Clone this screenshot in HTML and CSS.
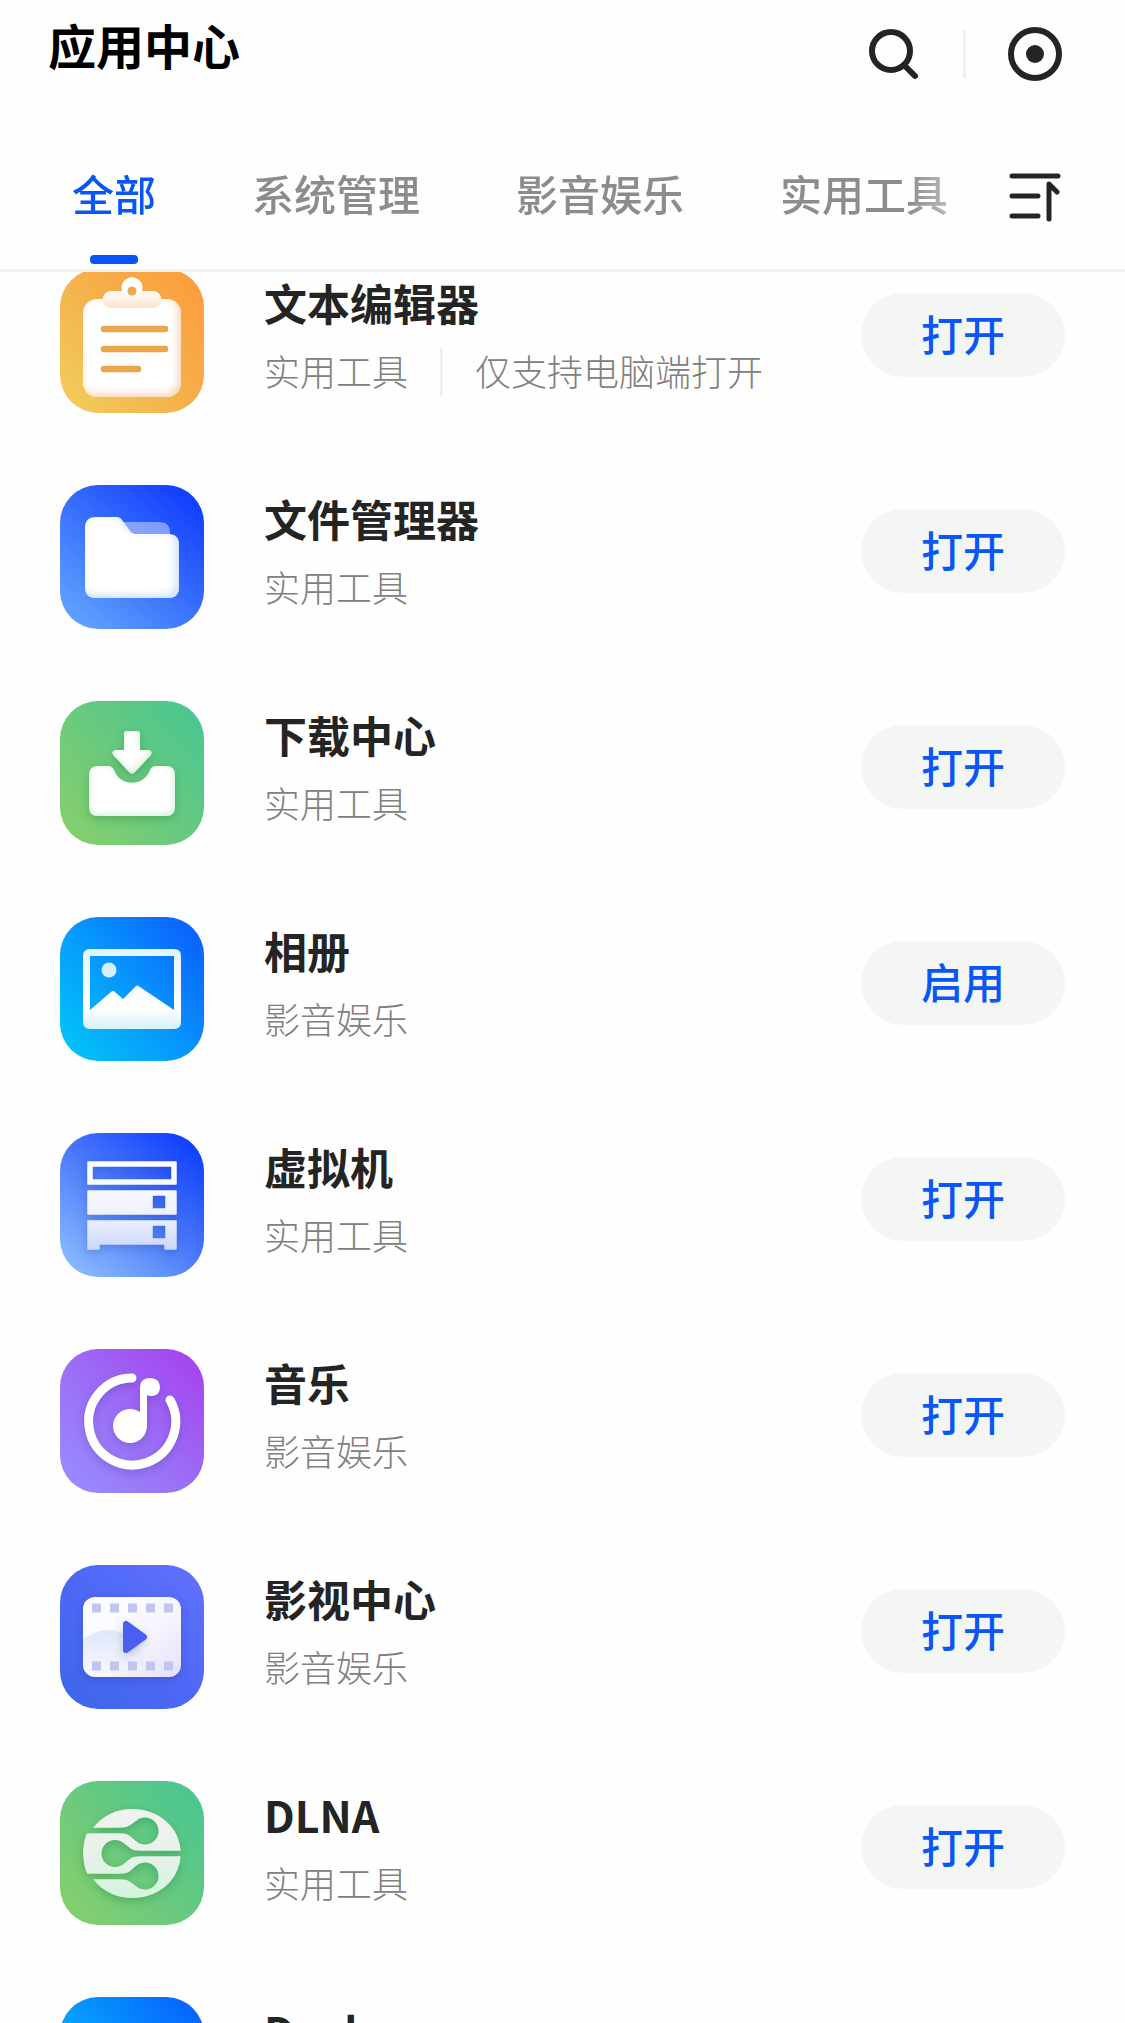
FILE: index.html
```html
<!doctype html>
<html lang="zh-CN">

<head>
	<meta charset="utf-8">
	<meta name="viewport" content="width=device-width, initial-scale=1">

	<title>应用中心</title>

	<link rel="stylesheet" href="styles.css">
</head>

<body>

	<!-- shared icon filters -->
	<svg class="defs" width="0" height="0" aria-hidden="true">
		<defs>
			<filter id="inPeach">
				<feGaussianBlur in="SourceAlpha" stdDeviation="4" />
				<feOffset dx="-3" dy="-3" result="b" />
				<feFlood flood-color="#f7d3ad" />
				<feComposite in2="b" operator="out" />
				<feComposite in2="SourceAlpha" operator="in" result="s" />
				<feMerge><feMergeNode in="SourceGraphic" /><feMergeNode in="s" /></feMerge>
			</filter>
			<filter id="inBlue">
				<feGaussianBlur in="SourceAlpha" stdDeviation="4" />
				<feOffset dx="-3" dy="-3" result="b" />
				<feFlood flood-color="#c3def5" />
				<feComposite in2="b" operator="out" />
				<feComposite in2="SourceAlpha" operator="in" result="s" />
				<feMerge><feMergeNode in="SourceGraphic" /><feMergeNode in="s" /></feMerge>
			</filter>
			<filter id="inGreen">
				<feGaussianBlur in="SourceAlpha" stdDeviation="3" />
				<feOffset dx="-1" dy="-2" result="b" />
				<feFlood flood-color="#cdeed3" />
				<feComposite in2="b" operator="out" />
				<feComposite in2="SourceAlpha" operator="in" result="s" />
				<feMerge><feMergeNode in="SourceGraphic" /><feMergeNode in="s" /></feMerge>
			</filter>
		</defs>
	</svg>

	<header>

		<div class="bar">
			<h1>应用中心</h1>
			<button class="tool" aria-label="搜索">
				<svg width="54" height="54" viewBox="0 0 54 54"><circle cx="24" cy="24" r="19" /><path d="M37 38L48 49" /></svg>
			</button>
			<span class="rule"></span>
			<button class="tool" aria-label="关闭">
				<svg width="54" height="54" viewBox="0 0 54 54"><circle cx="27" cy="27" r="24" /><circle class="dot" cx="27" cy="27" r="9" /></svg>
			</button>
		</div>

		<div class="filters">
			<nav>
				<a class="on" href="#all">全部</a>
				<a href="#system">系统管理</a>
				<a href="#media">影音娱乐</a>
				<a href="#utility">实用工具</a>
			</nav>
			<button class="sort" aria-label="排序">
				<svg width="54" height="54" viewBox="0 0 54 54"><path d="M4 8H50M4 28H30M4 48H30M41 51V16L49 24" /></svg>
			</button>
		</div>

	</header>

	<main>
		<ul>

			<li>
				<span class="icon editor">
					<svg viewBox="0 0 144 144">
						<rect x="23" y="30" width="98" height="98" rx="14" fill="#fff" filter="url(#inPeach)" />
						<linearGradient id="clip" x2="0" y2="1"><stop offset=".4" stop-color="#fff" /><stop offset="1" stop-color="#fbe3cb" /></linearGradient>
						<path d="M51 22H62A10.5 10.5 0 1 1 82 22H93A8.500 8.500 0 0 1 93 39H51A8.500 8.500 0 0 1 51 22Z" fill="url(#clip)" />
						<circle cx="72" cy="22" r="4.500" fill="#eda94f" />
						<path d="M44 60H105M44 80H105M44 100H78" stroke="#eba54a" stroke-width="6.500" stroke-linecap="round" />
					</svg>
				</span>
				<div class="info">
					<h2>文本编辑器</h2>
					<p>实用工具<span class="rule"></span>仅支持电脑端打开</p>
				</div>
				<button class="act">打开</button>
			</li>

			<li>
				<span class="icon files">
					<svg viewBox="0 0 144 144">
						<path d="M58 37H99Q110 37 110 48V54H58Z" fill="#fff" opacity=".42" />
						<path d="M36 32H57Q60 32 62 35L70 46Q72 49 75 49H108Q119 49 119 60V102Q119 113 108 113H36Q25 113 25 102V43Q25 32 36 32Z" fill="#fff" filter="url(#inBlue)" />
					</svg>
				</span>
				<div class="info">
					<h2>文件管理器</h2>
					<p>实用工具</p>
				</div>
				<button class="act">打开</button>
			</li>

			<li>
				<span class="icon download">
					<svg viewBox="0 0 144 144">
						<g class="lift">
							<path d="M38 65H48Q52 65 54 69C60 86 84 86 90 69Q92 65 96 65H106Q115 65 115 74V106Q115 115 106 115H38Q29 115 29 106V74Q29 65 38 65Z" fill="#fff" filter="url(#inGreen)" />
							<path d="M67 30H77Q80 30 80 33V49H88Q94 50 90 55L75 71Q72 74 69 71L54 55Q50 50 56 49H64V33Q64 30 67 30Z" fill="#fff" filter="url(#inGreen)" />
						</g>
					</svg>
				</span>
				<div class="info">
					<h2>下载中心</h2>
					<p>实用工具</p>
				</div>
				<button class="act">打开</button>
			</li>

			<li>
				<span class="icon photos">
					<svg viewBox="0 0 144 144">
						<linearGradient id="pic" x2="0" y2="1"><stop offset="0" stop-color="#e2f4ff" /><stop offset=".75" stop-color="#fff" /><stop offset="1" stop-color="#d6f1fb" /></linearGradient>
						<path fill-rule="evenodd" d="M30 32H114Q121 32 121 39V105Q121 112 114 112H30Q23 112 23 105V39Q23 32 30 32ZM30 39V93L51 75Q53 73 55 75L63 82L75 70Q77 67 80 70L114 93V39Z" fill="url(#pic)" />
						<circle cx="49" cy="53" r="7.500" fill="#d5f0fd" />
					</svg>
				</span>
				<div class="info">
					<h2>相册</h2>
					<p>影音娱乐</p>
				</div>
				<button class="act">启用</button>
			</li>

			<li>
				<span class="icon vm">
					<svg viewBox="0 0 144 144">
						<linearGradient id="rack" gradientUnits="userSpaceOnUse" x1="72" y1="28" x2="72" y2="117"><stop offset=".2" stop-color="#fbfcff" /><stop offset=".65" stop-color="#eceffd" /><stop offset="1" stop-color="#c9d6fb" /></linearGradient>
						<path class="lift" fill-rule="evenodd" fill="url(#rack)" stroke="url(#rack)" stroke-width="1.500" stroke-linejoin="round" d="M28 29H116V51H28ZM32 33V47H112V33ZM28 58H116V81H28ZM92 62V76H106V62ZM28 88H116V116H105V111H39V116H28ZM92 92V106H106V92Z" />
					</svg>
				</span>
				<div class="info">
					<h2>虚拟机</h2>
					<p>实用工具</p>
				</div>
				<button class="act">打开</button>
			</li>

			<li>
				<span class="icon music">
					<svg viewBox="0 0 144 144">
						<g class="lift" fill="#fff">
							<path d="M72 29A43.500 43.500 0 1 0 110 51" fill="none" stroke="#fff" stroke-width="9" stroke-linecap="round" />
							<circle cx="70" cy="77" r="17" />
							<path d="M80 77V38Q80 29 91 29Q100 30 100 38Q100 47 91 47Q88 47 87 46V77Z" />
						</g>
					</svg>
				</span>
				<div class="info">
					<h2>音乐</h2>
					<p>影音娱乐</p>
				</div>
				<button class="act">打开</button>
			</li>

			<li>
				<span class="icon video">
					<svg viewBox="0 0 144 144">
						<linearGradient id="film" x2="1" y2="1"><stop offset="0" stop-color="#fff" /><stop offset=".6" stop-color="#f6f4fd" /><stop offset="1" stop-color="#e2e0fa" /></linearGradient>
						<linearGradient id="hill" x2="0" y2="1"><stop offset="0" stop-color="#dfe6f8" /><stop offset="1" stop-color="#dfe6f8" stop-opacity="0" /></linearGradient>
						<rect class="lift" x="23" y="32" width="98" height="80" rx="12" fill="url(#film)" />
						<path d="M23 74Q45 58 68 71Q84 82 88 106H23Z" fill="url(#hill)" />
						<path d="M32 43H120M32 101H120" stroke="#c0c5f3" stroke-width="9" stroke-dasharray="9 9" />
						<path class="lift" d="M66 59V85L84 72Z" fill="#4a5ff0" stroke="#4a5ff0" stroke-width="6" stroke-linejoin="round" />
					</svg>
				</span>
				<div class="info">
					<h2>影视中心</h2>
					<p>影音娱乐</p>
				</div>
				<button class="act">打开</button>
			</li>

			<li>
				<span class="icon dlna">
					<svg viewBox="0 0 144 144">
						<linearGradient id="globe" x2="0" y2="1"><stop offset="0" stop-color="#f0f3f0" /><stop offset=".5" stop-color="#e8f1ea" /><stop offset="1" stop-color="#d3f4dc" /></linearGradient>
						<mask id="tracks">
							<rect width="144" height="144" fill="#fff" />
							<path d="M18 49.500H70M126 72.500H70M18 95.500H70" stroke="#000" stroke-width="5.500" />
							<path d="M60 47C68 47 70 44 76 40V60C70 55 68 52 60 52ZM80 70C72 70 70 67 64 62.500V82.500C70 78 72 75 80 75ZM60 93C68 93 70 90 76 85V105C70 101 68 98 60 98Z" />
							<circle cx="85" cy="50" r="13.500" /><circle cx="55" cy="72.500" r="13.500" /><circle cx="85" cy="95" r="13.500" />
						</mask>
						<g class="lift"><path d="M72 28C88 28 101 34 110 44Q120 55 121 72Q120 90 110 101C101 111 88 117 72 117C56 117 42 110 33 98Q24 95 23 72Q24 50 33 47C42 35 56 28 72 28Z" fill="url(#globe)" mask="url(#tracks)" /></g>
					</svg>
				</span>
				<div class="info">
					<h2>DLNA</h2>
					<p>实用工具</p>
				</div>
				<button class="act">打开</button>
			</li>

			<li>
				<span class="icon docker"></span>
				<div class="info">
					<h2>Docker</h2>
				</div>
			</li>

		</ul>
	</main>

</body>

</html>
```
FILE: styles.css
```css
		* {
			box-sizing: border-box;
		}

		:root {
			--blue: #0a55f5;
			--ink: #242424;
			--line: #f0f0f0;
		}

		body {
			background-color: #fefefe;
			color: var(--ink);
			display: flex;
			flex-direction: column;
			font-family: "Noto Sans CJK SC", sans-serif;
			height: 100vh;
			margin: 0;
		}

		h1,
		h2,
		p,
		ul {
			margin: 0;
			padding: 0;
		}

		a {
			color: inherit;
			text-decoration: none;
		}

		button {
			background: none;
			border: none;
			color: inherit;
			cursor: pointer;
			font: inherit;
			padding: 0;
		}

		svg {
			display: block;
		}

		.defs {
			position: absolute;
		}

		header {
			border-bottom: 3px solid var(--line);
			flex: none;
		}

		.bar {
			align-items: center;
			display: flex;
			gap: 42px;
			height: 108px;
			padding: 0 63px 0 48px;
		}

		h1 {
			color: #000;
			flex: 1;
			font-size: 48px;
			font-weight: 700;
			line-height: 60px;
			padding-bottom: 20px;
		}

		.tool svg,
		.sort svg {
			fill: none;
			stroke: var(--ink);
			stroke-linecap: round;
			stroke-linejoin: round;
			stroke-width: 6;
		}

		.sort svg {
			stroke-width: 5;
		}

		.tool .dot {
			fill: var(--ink);
			stroke: none;
		}

		.rule {
			background-color: var(--line);
			flex: none;
			height: 48px;
			width: 3px;
		}

		.filters {
			align-items: center;
			display: flex;
			height: 161px;
			padding-right: 63px;
		}

		nav {
			color: #8c8c8c;
			display: flex;
			flex: 1;
			font-size: 42px;
			font-weight: 500;
			gap: 96px;
			height: 100%;
			-webkit-mask-image: linear-gradient(to left, transparent, #000 100px);
			mask-image: linear-gradient(to left, transparent, #000 100px);
			min-width: 0;
			overflow: hidden;
			padding-left: 72px;
		}

		nav a {
			align-items: center;
			display: flex;
			flex-direction: column;
			justify-content: space-between;
			line-height: 60px;
			padding: 55px 0 5px;
			white-space: nowrap;
		}

		nav .on {
			color: var(--blue);
		}

		nav .on::after {
			background-color: var(--blue);
			border-radius: 4px;
			content: "";
			height: 9px;
			width: 48px;
		}

		.sort {
			padding-top: 12px;
		}

		main {
			flex: 1;
			min-height: 0;
			overflow-y: auto;
			scrollbar-width: none;
		}

		/* the list is scrolled slightly under the header */
		ul {
			list-style: none;
			margin-top: -3px;
		}

		li {
			align-items: flex-start;
			display: flex;
			height: 216px;
			padding: 0 60px;
		}

		.icon {
			border-radius: 38px;
			flex: none;
			height: 144px;
			margin-right: 60px;
			overflow: hidden;
			width: 144px;
		}

		.lift {
			filter: drop-shadow(0 3px 4px rgba(20, 40, 120, 0.22));
		}

		.editor {
			background: linear-gradient(50deg, #f2cf5c, #f4b34e 45%, #fd9a3b);
		}

		.files {
			background: linear-gradient(40deg, #66abff, #3d75fd 45%, #1340ff 90%);
		}

		.download,
		.dlna {
			background: linear-gradient(50deg, #8ad06a, #68c97f 50%, #45c693);
		}

		.download .lift,
		.dlna .lift {
			filter: drop-shadow(0 3px 4px rgba(20, 120, 50, 0.35));
		}

		.photos {
			background: linear-gradient(50deg, #02c9f5, #0796fd 50%, #0b64ff 90%);
		}

		.vm {
			background: linear-gradient(40deg, #93c4ff, #4b7afb 50%, #1040ff 92%);
		}

		.music {
			background: linear-gradient(45deg, #988fff, #9c6cf6 50%, #a63eec);
		}

		.video {
			background: linear-gradient(45deg, #3c66ec, #4e68f5 50%, #6270ff);
		}

		.docker {
			background: linear-gradient(50deg, #02c9f5, #0796fd 50%, #0667ff 90%);
		}

		.info {
			display: flex;
			flex: 1;
			flex-direction: column;
			gap: 16px;
			min-width: 0;
			padding-top: 3px;
		}

		h2 {
			font-size: 43px;
			font-weight: 700;
			line-height: 60px;
		}

		p {
			color: #808080;
			display: flex;
			font-size: 36px;
			font-weight: 300;
			gap: 32px;
			line-height: 44px;
			white-space: nowrap;
		}

		.act {
			background-color: #f4f5f5;
			border-radius: 42px;
			color: var(--blue);
			flex: none;
			font-size: 42px;
			font-weight: 500;
			height: 84px;
			line-height: 60px;
			margin-top: 24px;
			padding-bottom: 4px;
			width: 204px;
		}
```
